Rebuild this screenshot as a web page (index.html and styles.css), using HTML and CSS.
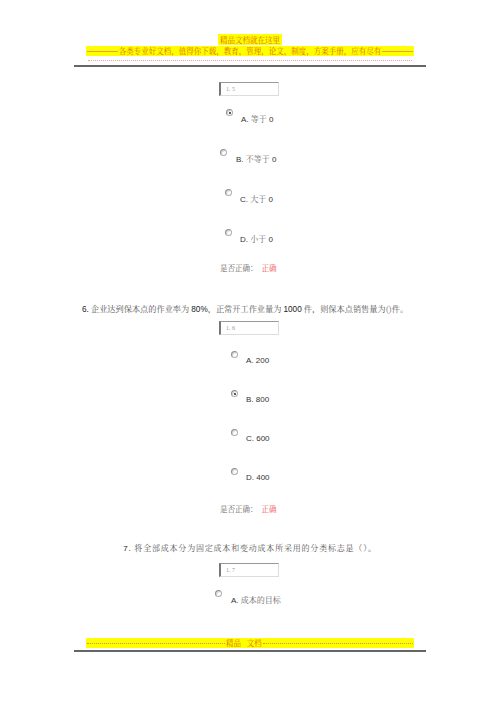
FILE: index.html
```html
<!DOCTYPE html>
<html>
<head>
<meta charset="utf-8">
<link rel="stylesheet" href="styles.css">
</head>
<body>
<div class="page">
  <div class="header">
    <div class="h1"><span class="hl">精品文档就在这里</span></div>
    <div class="h2"><span class="dash"></span><span class="h2t">各类专业好文档，值得你下载，教育，管理，论文，制度，方案手册，应有尽有</span><span class="dash"></span></div>
    <div class="dots"></div>
    <div class="rule"></div>
  </div>

  <div class="box b1">1. 5</div>
  <div class="opt o1 q5a"><span class="radio on"></span><span class="lbl">A. <i>等于</i> 0</span></div>
  <div class="opt q5b"><span class="radio"></span><span class="lbl">B. <i>不等于</i> 0</span></div>
  <div class="opt q5c"><span class="radio"></span><span class="lbl">C. <i>大于</i> 0</span></div>
  <div class="opt q5d"><span class="radio"></span><span class="lbl">D. <i>小于</i> 0</span></div>
  <div class="verdict v1">是否正确：<span class="ok">正确</span></div>

  <div class="q q6"><b>6.</b> 企业达到保本点的作业率为 <b>80%</b>，正常开工作业量为 <b>1000</b> 件，则保本点销售量为()件。</div>
  <div class="box b2">1. 6</div>
  <div class="opt o1 q6o"><span class="radio"></span><span class="lbl">A. 200</span></div>
  <div class="opt q6o"><span class="radio on"></span><span class="lbl">B. 800</span></div>
  <div class="opt q6o"><span class="radio"></span><span class="lbl">C. 600</span></div>
  <div class="opt q6o"><span class="radio"></span><span class="lbl">D. 400</span></div>
  <div class="verdict v2">是否正确：<span class="ok">正确</span></div>

  <div class="q q7"><b>7.</b> 将全部成本分为固定成本和变动成本所采用的分类标志是（）。</div>
  <div class="box b3">1. 7</div>
  <div class="opt o1 q7a"><span class="radio"></span><span class="lbl">A. <i>成本的目标</i></span></div>

  <div class="footer">
    <div class="f1"><span class="dash dl"></span><span class="ft">精品&nbsp;&nbsp;&nbsp;文档</span><span class="dash"></span></div>
    <div class="rule"></div>
  </div>
</div>
</body>
</html>
```

FILE: styles.css
```css
html, body {
  margin: 0;
  padding: 0;
  background: #ffffff;
}
.page {
  width: 500px;
  height: 707px;
  font-family: "Noto Serif CJK SC", "Noto Sans CJK SC", serif;
  color: #555;
  font-size: 8px;
  line-height: 10px;
}
.header {
  padding-top: 35px;
}
.h1 {
  text-align: center;
  font-size: 7.5px;
  line-height: 10px;
  height: 10px;
  color: #e06a00;
}
.hl {
  background: #ffff00;
  padding: 0 2px;
}
.h2 {
  width: 328px;
  height: 10px;
  margin: 1px auto 0;
  background: #ffff00;
  display: flex;
  align-items: center;
  font-size: 7.5px;
  line-height: 10px;
  color: #e06a00;
  white-space: nowrap;
}
.dash {
  flex: 1;
  border-top: 1px solid #e8a040;
  margin: 1px 1px 0;
}
.dots {
  width: 324px;
  margin: 4px auto 0;
  border-top: 1px dotted #f0a0a0;
}
.rule {
  width: 352px;
  margin: 4px auto 0;
  border-top: 2px solid #666;
}
.box {
  width: 52px;
  height: 12px;
  margin-left: 219px;
  border-top: 1px solid #999;
  border-left: 2px solid #777;
  border-right: 1px solid #ddd;
  border-bottom: 1px solid #ddd;
  font-size: 6px;
  line-height: 12px;
  color: #999;
  padding-left: 5px;
  box-sizing: content-box;
  font-family: "Liberation Serif", serif;
}
.b1 { margin-top: 15px; }
.b2 { margin-top: 7px; }
.b3 { margin-top: 10px; }
.opt {
  display: flex;
  align-items: flex-start;
  height: 14px;
  margin-top: 26px;
}
.opt.o1 { margin-top: 13px; }
.radio {
  width: 5px;
  height: 5px;
  border: 1px solid #b0b0b0;
  border-top-color: #909090;
  border-left-color: #909090;
  border-radius: 50%;
  background: #fff;
  box-shadow: inset 1px 1px 1px #ccc;
  display: flex;
  align-items: center;
  justify-content: center;
  flex: none;
}
.radio.on::after {
  content: "";
  width: 2px;
  height: 2px;
  border-radius: 50%;
  background: #222;
}
.lbl {
  margin-top: 5px;
  margin-left: 8px;
  font-family: "Liberation Sans", "Noto Sans CJK SC", sans-serif;
  font-size: 8px;
  line-height: 10px;
  color: #333;
  white-space: nowrap;
}
.lbl i {
  font-style: normal;
  font-family: "Noto Serif CJK SC", "Noto Sans CJK SC", serif;
  color: #666;
}
.q5a { padding-left: 226px; }
.q5b { padding-left: 220px; }
.q5b .lbl { margin-left: 9px; }
.q5c { padding-left: 225px; }
.q5d { padding-left: 225px; }
.q5d + .verdict { margin-top: 20px; }
.q6o { padding-left: 231px; margin-top: 25px; }
.q6o.o1 { margin-top: 16px; }
.q7a { padding-left: 215px; }
.q7a .lbl { margin-left: 9px; }
.verdict {
  margin-left: 220px;
  height: 10px;
  font-size: 7.5px;
  line-height: 10px;
  color: #666;
}
.v2 { margin-top: 22px; }
.ok {
  color: #f05050;
  margin-left: 4px;
}
.q {
  height: 10px;
  font-size: 8px;
  line-height: 10px;
  color: #555;
  white-space: nowrap;
}
.q b {
  font-family: "Liberation Sans", sans-serif;
  font-weight: normal;
  color: #222;
}
.q6 {
  margin-top: 31px;
  padding-left: 82px;
  font-size: 8.2px;
}
.q7 {
  margin-top: 29px;
  text-align: center;
  letter-spacing: 0.8px;
}
.footer {
  margin-top: 34px;
}
.f1 {
  width: 328px;
  height: 10px;
  margin: 0 auto;
  background: #ffff00;
  display: flex;
  align-items: center;
  font-size: 7.5px;
  line-height: 10px;
  color: #e06a00;
}
.f1 .dash {
  border-top: 1px dotted #d89040;
}
.f1 .dl {
  flex: 0.92;
}
.footer .rule {
  margin-top: 2px;
}
```
